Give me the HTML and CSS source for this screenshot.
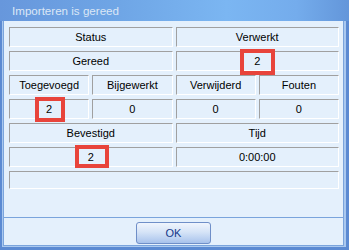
FILE: index.html
```html
<!DOCTYPE html>
<html>
<head>
<meta charset="utf-8">
<link rel="stylesheet" href="styles.css">
</head>
<body>
<div class="window">
  <div class="titlebar">Importeren is gereed</div>
  <div class="client">
    <div class="frame">
      <div class="panel">
        <div class="grid">
          <div class="cell span2">Status</div>
          <div class="cell span2">Verwerkt</div>
          <div class="cell span2">Gereed</div>
          <div class="cell span2">2<span class="mark mark-a"></span></div>
          <div class="cell">Toegevoegd</div>
          <div class="cell">Bijgewerkt</div>
          <div class="cell">Verwijderd</div>
          <div class="cell">Fouten</div>
          <div class="cell">2<span class="mark mark-b"></span></div>
          <div class="cell">0</div>
          <div class="cell">0</div>
          <div class="cell">0</div>
          <div class="cell span2">Bevestigd</div>
          <div class="cell span2">Tijd</div>
          <div class="cell span2">2<span class="mark mark-c"></span></div>
          <div class="cell span2">0:00:00</div>
          <div class="cell span4 bar"></div>
        </div>
      </div>
      <div class="buttons">
        <button class="btn">OK</button>
      </div>
    </div>
  </div>
</div>
</body>
</html>
```

FILE: styles.css
```css
html, body {
  margin: 0;
  padding: 0;
  background: #ffffff;
}

.window {
  width: 349px;
  height: 250px;
  box-sizing: border-box;
  border-left: 2px solid #5b8ad2;
  border-right: 3px solid #5b8ad2;
  border-bottom: 3px solid #5b8ad2;
  display: flex;
  flex-direction: column;
  font-family: "Liberation Sans", Arial, sans-serif;
  font-size: 11px;
  color: #000;
}

.titlebar {
  height: 21px;
  flex: none;
  box-sizing: border-box;
  padding: 2px 0 0 10px;
  margin-left: -2px;
  margin-right: -3px;
  padding-left: 12px;
  background: linear-gradient(to right, #6797dc 0%, #6fa6e6 35%, #7bb6f2 65%, #74acec 85%, #6396da 100%);
  color: #dbe7f6;
  font-size: 11.6px;
  line-height: 17px;
}

.client {
  flex: 1;
  display: flex;
  flex-direction: column;
  background: #e4f0fc;
  border-left: 1px solid #a9c8ef;
  border-right: 2px solid #a9c8ef;
  border-bottom: 1px solid #a9c8ef;
}

.frame {
  flex: 1;
  display: flex;
  flex-direction: column;
  border-left: 1px solid #7aa4dc;
  border-right: 1px solid #7aa4dc;
  border-bottom: 1px solid #7aa4dc;
}

.panel {
  height: 197px;
  box-sizing: border-box;
  padding: 6px 4px 0 5px;
  border-bottom: 1px solid #7aa4dc;
}

.grid {
  display: grid;
  grid-template-columns: repeat(4, 1fr);
  grid-auto-rows: 20px;
  column-gap: 3px;
  row-gap: 4px;
}

.cell {
  position: relative;
  box-sizing: border-box;
  border-top: 1px solid #a0a0a0;
  border-left: 1px solid #a0a0a0;
  border-bottom: 1px solid #ffffff;
  border-right: 1px solid #ffffff;
  display: flex;
  align-items: center;
  justify-content: center;
  line-height: 1;
  white-space: nowrap;
}

.span2 { grid-column: span 2; }
.span4 { grid-column: span 4; }
.bar { height: 18px; }

.mark {
  position: absolute;
  box-sizing: border-box;
  border: 4px solid #e8443b;
}

.mark-a { left: 63px; top: -3px; width: 35px; height: 26px; }
.mark-b { left: 25px; top: -3px; width: 30px; height: 25px; }
.mark-c { left: 65px; top: -3px; width: 34px; height: 23px; }

.buttons {
  flex: 1;
  display: flex;
  justify-content: center;
  align-items: flex-start;
  padding-top: 4px;
}

.btn {
  width: 75px;
  height: 22px;
  margin: 0;
  padding: 0;
  border: 1px solid #6f8fc8;
  border-radius: 3px;
  background: linear-gradient(to bottom, #f0f5fd 0%, #d6e4f7 45%, #b9cff0 80%, #a7c2eb 100%);
  color: #15398a;
  font-family: "Liberation Sans", Arial, sans-serif;
  font-size: 11px;
}
```
